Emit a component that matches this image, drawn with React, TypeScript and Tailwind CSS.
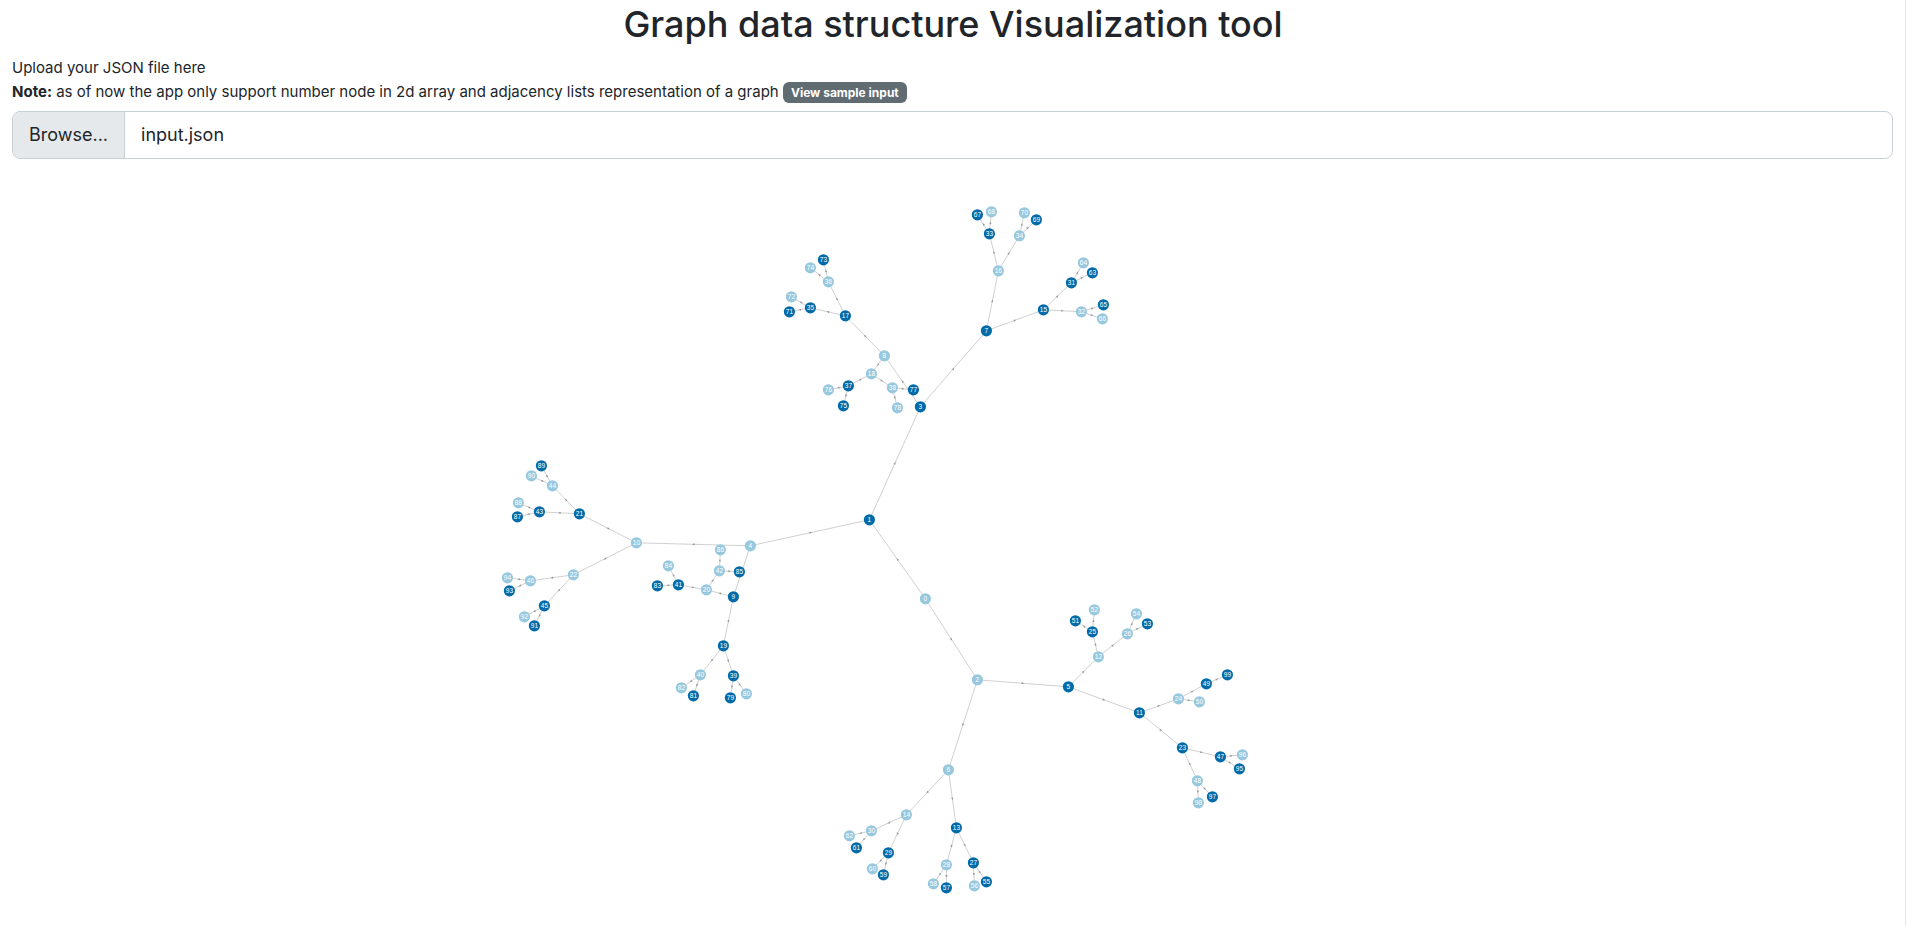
const positions: Record<number, [number, number]> = {
  0: [925, 598], 1: [869, 519], 2: [977, 679], 3: [920, 406], 4: [750, 545], 5: [1068, 686],
  6: [948, 769], 7: [986, 330], 8: [884, 355], 9: [733, 596], 10: [636, 542], 11: [1139, 712],
  12: [1098, 656], 13: [956, 827], 14: [906, 814], 15: [1043, 309], 16: [998, 270], 17: [845, 315],
  18: [871, 373], 19: [723, 645], 20: [706, 589], 21: [579, 513], 22: [573, 574], 23: [1182, 747],
  24: [1178, 698], 25: [1092, 631], 26: [1127, 633], 27: [973, 862], 28: [946, 864], 29: [888, 852],
  30: [871, 830], 31: [1071, 282], 32: [1081, 311], 33: [989, 233], 34: [1019, 235], 35: [810, 307],
  36: [828, 281], 37: [848, 385], 38: [892, 387], 39: [733, 675], 40: [700, 674], 41: [678, 584],
  42: [719, 570], 43: [539, 511], 44: [552, 485], 45: [544, 605], 46: [530, 580], 47: [1220, 756],
  48: [1197, 780], 49: [1206, 683], 50: [1199, 701], 51: [1075, 620], 52: [1094, 609], 53: [1147, 623],
  54: [1136, 613], 55: [986, 881], 56: [974, 885], 57: [946, 887], 58: [933, 883], 59: [883, 874],
  60: [872, 868], 61: [856, 847], 62: [849, 835], 63: [1092, 272], 64: [1083, 262], 65: [1103, 304],
  66: [1102, 318], 67: [977, 214], 68: [991, 211], 69: [1036, 219], 70: [1024, 212], 71: [789, 311],
  72: [791, 296], 73: [823, 259], 74: [810, 267], 75: [843, 405], 76: [828, 389], 77: [913, 389],
  78: [897, 407], 79: [730, 697], 80: [746, 693], 81: [693, 695], 82: [681, 687], 83: [657, 585],
  84: [668, 565], 85: [739, 571], 86: [720, 549], 87: [517, 516], 88: [518, 502], 89: [541, 465],
  90: [531, 475], 91: [534, 625], 92: [524, 616], 93: [509, 590], 94: [507, 577], 95: [1239, 768],
  96: [1242, 754], 97: [1212, 796], 98: [1198, 802], 99: [1227, 674],
};

const nodes = Object.entries(positions).map(([id, [x, y]]) => ({ id: Number(id), x, y }));

const edges = nodes
  .filter(({ id }) => id > 0)
  .map(({ id, x, y }) => {
    const [px, py] = positions[Math.floor((id - 1) / 2)];
    return { id, x, y, px, py };
  });

function Graph() {
  return (
    <svg
      viewBox="-0.4 158.2 1906 766"
      role="img"
      aria-label="Graph"
      className="block w-full"
      fontFamily="'Liberation Sans', Arial, sans-serif"
    >
      {edges.map(({ id, x, y, px, py }) => {
        const angle = (Math.atan2(y - py, x - px) * 180) / Math.PI;
        return (
          <g key={id}>
            <line x1={px} y1={py} x2={x} y2={y} stroke="#c4c4c4" strokeWidth="0.8" />
            <path
              d="M-1.2 -1.1 L1.4 0 L-1.2 1.1 Z"
              fill="#999999"
              transform={`translate(${(x + px) / 2} ${(y + py) / 2}) rotate(${angle})`}
            />
          </g>
        );
      })}
      {nodes.map(({ id, x, y }) => (
        <g key={id}>
          <circle cx={x} cy={y} r="5.6" fill={id % 2 ? "#006ba8" : "#98c8de"} />
          <text x={x} y={y + 1.8} fontSize="6.5" fill="#ffffff" textAnchor="middle">
            {id}
          </text>
        </g>
      ))}
    </svg>
  );
}

export default function App() {
  return (
    <div className="min-h-screen bg-white font-['Inter',sans-serif] text-[#212529] shadow-[inset_-1px_0_0_#e3e5e7]">
      <h1 className="text-center text-4xl leading-12 font-medium">
        Graph data structure Visualization tool
      </h1>
      <main className="pt-2 pr-[13px] pl-3">
        <label htmlFor="graph-file" className="block text-[15px] leading-6">
          Upload your JSON file here
        </label>
        <p className="text-[15px] leading-6">
          <strong className="font-bold">Note:</strong> as of now the app only support number node in
          2d array and adjacency lists representation of a graph{" "}
          <button type="button" className="rounded-md bg-[#616b72] px-2 py-1 text-xs leading-[13px] font-bold text-white">
            View sample input
          </button>
        </p>
        <div className="relative mt-[7px] flex h-12 overflow-hidden rounded-lg border border-[#c8cfd6] text-lg">
          <span className="flex items-center border-r border-[#c8cfd6] bg-[#e5e9ec] px-4">Browse...</span>
          <span className="flex items-center px-4">input.json</span>
          <input
            id="graph-file"
            type="file"
            accept=".json"
            className="absolute inset-0 h-full w-full cursor-pointer opacity-0"
          />
        </div>
      </main>
      <Graph />
    </div>
  );
}
